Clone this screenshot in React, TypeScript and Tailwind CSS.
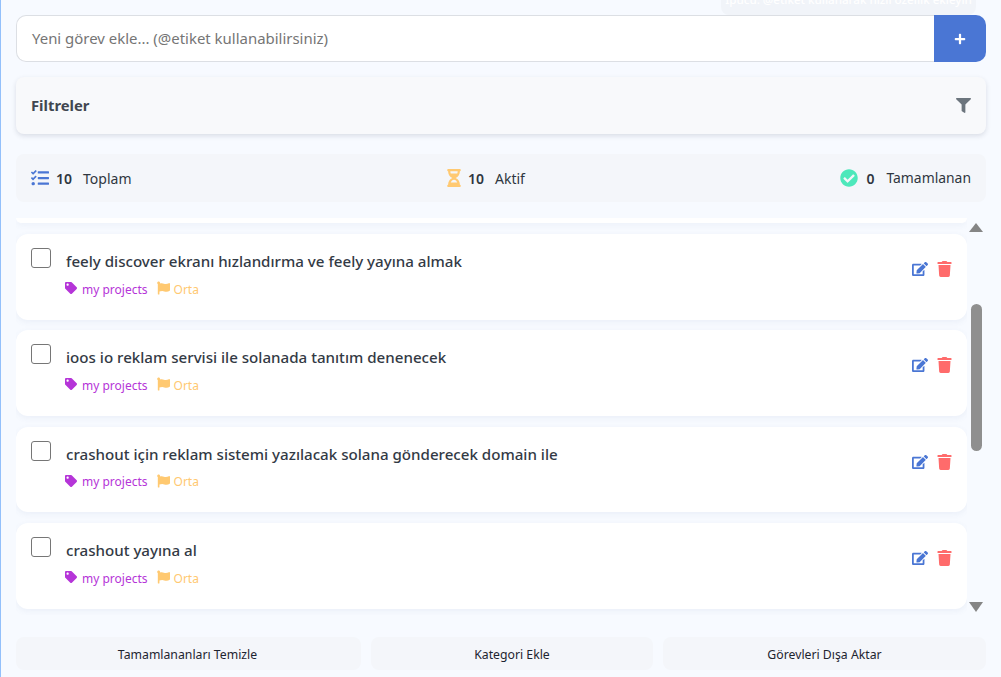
import { FaCheckCircle, FaEdit, FaFilter, FaFlag, FaHourglassHalf, FaPlus, FaTag, FaTasks, FaTrash } from "react-icons/fa";

const tasks = [
  "feely discover ekranı hızlandırma ve feely yayına almak",
  "ioos io reklam servisi ile solanada tanıtım denenecek",
  "crashout için reklam sistemi yazılacak solana gönderecek domain ile",
  "crashout yayına al",
];

function TaskCard({ title }: { title: string }) {
  return (
    <div className="h-[85.5px] shrink-0 rounded-xl bg-white shadow-[0_2px_6px_rgba(70,100,160,0.07)] pl-[15px] pr-[15px] flex">
      <div className="mt-[14px] w-5 h-5 shrink-0 rounded-[3px] border border-[#767676] bg-white" />
      <div className="ml-[15px] flex-1 min-w-0 pt-[16px]">
        <div className="text-[15.12px] leading-[22px] font-[550] text-[#333a45]">{title}</div>
        <div className="mt-[8.54px] flex items-center text-[12px] leading-[18px]">
          <FaTag className="text-[#b535d8] w-[12px] h-[12px] -mt-[3px] -ml-px" />
          <span className="ml-[5px] text-[#b535d8]">my projects</span>
          <FaFlag className="ml-[9px] text-[#ffc971] w-[13px] h-[14px] -mt-[3px]" />
          <span className="ml-[4px] text-[#ffc971]">Orta</span>
        </div>
      </div>
      <div className="flex items-center gap-[9px] h-full pb-[15.5px]">
        <FaEdit className="text-[#4a76d4] w-[16px] h-[16px]" />
        <FaTrash className="text-[#ff6b6b] w-[15px] h-[16px]" />
      </div>
    </div>
  );
}

export default function App() {
  return (
    <div
      className="relative h-[677px] overflow-hidden bg-[#f7faff] border-l-[1px] border-[#93c0fb] pl-[15px] pr-[15px] pt-[15px]"
      style={{ fontFamily: '"Noto Sans", "Open Sans", sans-serif' }}
    >
      <div className="absolute top-[-14px] left-[720px] w-[255px] h-[29px] rounded-lg bg-[#f1f4f9] text-white text-[11.6px] font-medium leading-[28px] text-center whitespace-nowrap">
        İpucu: @etiket kullanarak hızlı özellik ekleyin
      </div>

      <div className="relative flex h-[47px]">
        <div className="flex-1 flex items-center rounded-l-[10px] border border-r-0 border-[#dcdfe4] bg-white pl-[15px] text-[14.95px] text-[#757575]">
          Yeni görev ekle... (@etiket kullanabilirsiniz)
        </div>
        <button className="w-[52px] rounded-r-[10px] bg-[#4a76d4] flex items-center justify-center">
          <FaPlus className="text-white w-3 h-3" />
        </button>
      </div>

      <div className="mt-[15px] h-[57px] rounded-lg bg-[#f8f9fb] shadow-[0_2px_5px_rgba(40,50,80,0.14)] pl-[15px] pr-[15px] flex items-center justify-between">
        <span className="text-[14.8px] font-bold text-[#414750]">Filtreler</span>
        <FaFilter className="text-[#6c757d] w-[15px] h-[15px]" />
      </div>

      <div className="mt-[20px] h-[48px] rounded-lg bg-[#f4f6fa] px-[15px] flex items-center justify-between text-[14px] text-[#2f3640]">
        <div className="flex items-center">
          <FaTasks className="text-[#4a76d4] w-[18px] h-[18px]" />
          <span className="ml-[7px] font-semibold">10</span>
          <span className="ml-[11px]">Toplam</span>
        </div>
        <div className="flex items-center">
          <FaHourglassHalf className="text-[#ffc971] w-[14px] h-[18px]" />
          <span className="ml-[7px] font-semibold">10</span>
          <span className="ml-[11px]">Aktif</span>
        </div>
        <div className="flex items-center">
          <FaCheckCircle className="text-[#4de8bb] w-[18px] h-[18px]" />
          <span className="ml-[8px] font-semibold">0</span>
          <span className="ml-[12px] text-[13.9px]">Tamamlanan</span>
        </div>
      </div>

      <div className="mt-[16px] h-[397px] flex">
        <div className="flex-1 min-w-0 overflow-hidden flex flex-col gap-[10.83px] pb-2">
          <div className="h-[5.2px] shrink-0 rounded-b-xl bg-white shadow-[0_2px_6px_rgba(70,100,160,0.07)]" />
          {tasks.map((t) => (
            <TaskCard key={t} title={t} />
          ))}
        </div>
        <div className="w-[19px] shrink-0 flex flex-col items-center pr-[1px] pt-[5px]">
          <div className="w-0 h-0 border-x-[7px] border-x-transparent border-b-[9px] border-b-[#858585]" />
          <div className="flex-1 pt-[72px]">
            <div className="w-[11px] h-[147px] rounded-full bg-[#8f8f8f]" />
          </div>
          <div className="w-0 h-0 border-x-[7px] border-x-transparent border-t-[10px] border-t-[#858585] mb-[3px]" />
        </div>
      </div>

      <div className="mt-[22px] h-[33px] flex gap-[10px] text-[12.25px] text-[#1d2430]">
        <div className="w-[345px] rounded-lg bg-[#f4f6fa] pt-[3px] pr-[2px] flex items-center justify-center">Tamamlananları Temizle</div>
        <div className="w-[282px] rounded-lg bg-[#f4f6fa] pt-[3px] flex items-center justify-center">Kategori Ekle</div>
        <div className="flex-1 rounded-lg bg-[#f4f6fa] pt-[3px] flex items-center justify-center">Görevleri Dışa Aktar</div>
      </div>
    </div>
  );
}
